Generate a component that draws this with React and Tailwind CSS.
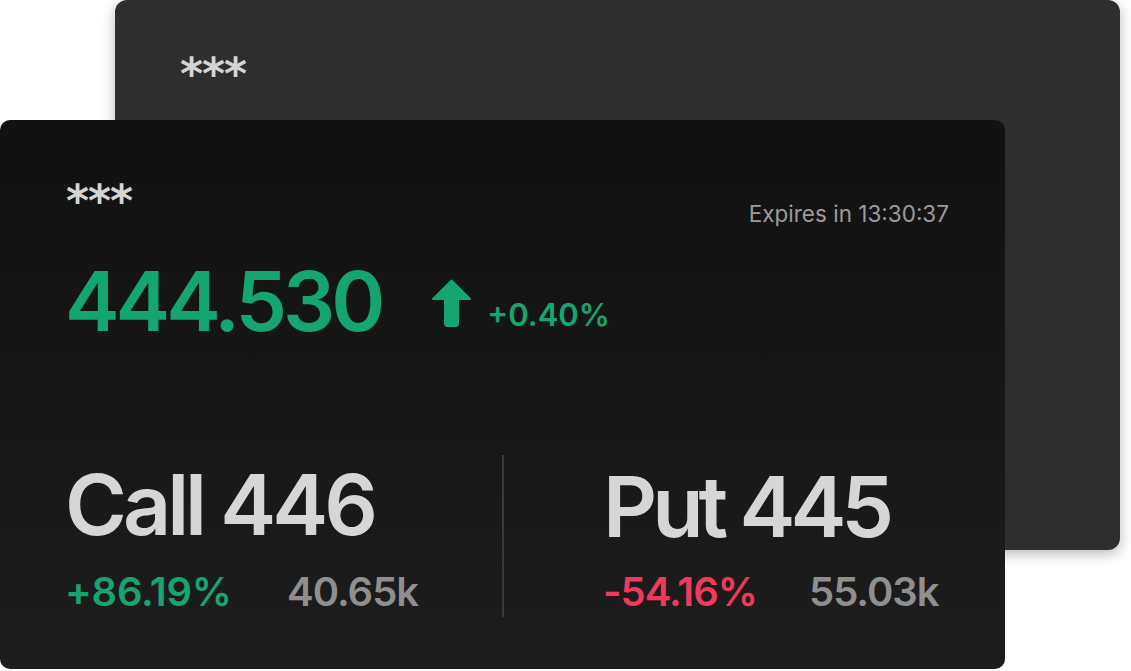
import React from "react";

function UpArrow() {
  return (
    <svg width="41" height="48" viewBox="0 0 41 48" fill="#14a571">
      <path
        d="M20.5 1.5 L39 20 L27 20 L27 44.5 Q27 47 24.5 47 L16.5 47 Q14 47 14 44.5 L14 20 L2 20 Z"
        stroke="#14a571"
        strokeWidth="2"
        strokeLinejoin="round"
      />
    </svg>
  );
}

function Stars() {
  return (
    <div
      className="text-[44px] leading-[40px] font-bold text-[#d4d4d4] tracking-[-1px]"
      style={{ fontFamily: "'DejaVu Sans', sans-serif" }}
    >
      ***
    </div>
  );
}

export default function App() {
  const font = { fontFamily: "Inter, 'Noto Sans', sans-serif" };
  return (
    <div className="relative w-[1131px] h-[671px] bg-white overflow-hidden" style={font}>
      <div className="absolute left-[115px] top-0 w-[1005px] h-[550px] rounded-[12px] bg-[#2e2e2e] shadow-[0_4px_14px_rgba(0,0,0,0.28)] px-[65px] pt-[54px]">
        <Stars />
      </div>

      <div className="absolute left-0 top-[120px] w-[1005px] h-[549px] rounded-[10px] bg-gradient-to-b from-[#111111] to-[#1d1d1d] flex flex-col">
        <div className="flex items-start justify-between pl-[66px] pr-[56px] pt-[61px]">
          <Stars />
          <div className="text-[22.5px] leading-[26px] text-[#9b9b9b] mt-[20px]">Expires in 13:30:37</div>
        </div>

        <div className="flex items-end pl-[65px] mt-[33px]">
          <div className="text-[82px] leading-[84px] font-semibold text-[#14a571] tracking-[-4px]">444.530</div>
          <div className="ml-[50px] mb-[17px]">
            <UpArrow />
          </div>
          <div className="ml-[15px] mb-[11px] text-[31px] leading-[36px] font-semibold text-[#14a571]">+0.40%</div>
        </div>

        <div className="flex mt-[106px]">
          <div className="w-[502px] pl-[65px] pt-[13px]">
            <div className="text-[84px] leading-[84px] font-semibold text-[#d6d6d6] tracking-[-4px]">Call 446</div>
            <div className="flex mt-[23px] text-[40px] leading-[44px] font-semibold">
              <span className="text-[#14a571] w-[222px] tracking-[-0.3px]">+86.19%</span>
              <span className="text-[#8f8f8f] tracking-[-1px]">40.65k</span>
            </div>
          </div>
          <div className="w-[2px] h-[162px] mt-[5px] bg-[#3a3a3a]"></div>
          <div className="flex-1 pl-[99px] pt-[15px]">
            <div className="text-[84px] leading-[84px] font-semibold text-[#d6d6d6] tracking-[-5px]">Put 445</div>
            <div className="flex mt-[21px] text-[40px] leading-[44px] font-semibold">
              <span className="text-[#f2385b] w-[206px] tracking-[-1px]">-54.16%</span>
              <span className="text-[#8f8f8f] tracking-[-1px]">55.03k</span>
            </div>
          </div>
        </div>
      </div>
    </div>
  );
}
